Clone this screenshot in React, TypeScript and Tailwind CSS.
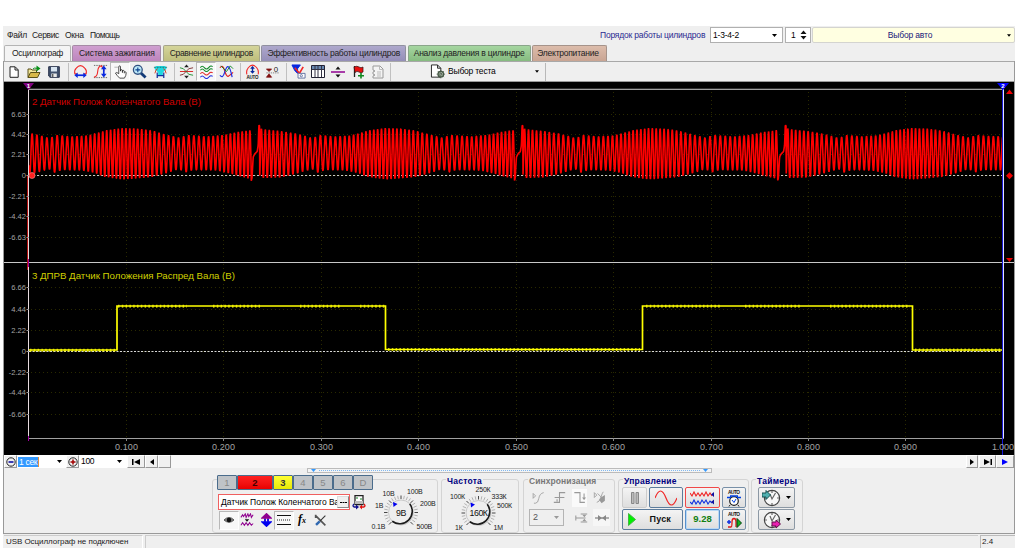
import type { ReactNode } from "react";
import clsx from "clsx";

const RED = "#ff0000";
const REV = 263.2; // px per crankshaft revolution
const GAP = 251.2; // x of the missing teeth

// upper / lower envelope of the crank sensor, x is measured from the gap
const TOP: [number, number][] = [
  [0, 130], [8, 127], [11, 129], [29, 131], [44, 133.5], [54, 136], [62, 138.5], [67, 135], [84, 136.5],
  [99, 135.5], [109, 133], [119, 130], [134, 128], [149, 128.5], [164, 130.5], [176, 134], [192, 138],
  [198, 135], [219, 136.5], [236, 135], [249, 132], [263.2, 130],
];
const BOTTOM: [number, number][] = [
  [0, 179], [11, 178], [29, 177.5], [44, 174], [54, 171], [61, 169], [65, 173], [74, 170], [94, 170.5],
  [107, 173], [117, 177], [134, 179.5], [149, 178.5], [164, 177], [179, 173], [191, 169], [197, 172.5],
  [205, 170], [229, 170.5], [244, 174], [254, 177], [263.2, 179],
];

function lerp(points: [number, number][], x: number) {
  for (let i = 1; i < points.length; i++) {
    const [x1, y1] = points[i];
    if (x <= x1) {
      const [x0, y0] = points[i - 1];
      return y0 + ((y1 - y0) * (x - x0)) / (x1 - x0);
    }
  }
  return points[points.length - 1][1];
}

function crankPath() {
  const pts: string[] = [];
  for (let x = 29; x <= 1002.5; x += 0.25) {
    const p = (((x - GAP) % REV) + REV) % REV;
    let y: number;
    if (p < 8.4) {
      y = lerp([[0, 181], [0.8, 178], [2, 157], [3.5, 154], [6, 151.5], [7, 145], [7.7, 125], [8.4, 126]], p);
    } else {
      const t = (p / REV) * 2 * Math.PI;
      const phase = 60 * t + 4.4 * Math.sin(2 * t);
      const top = lerp(TOP, p);
      const bottom = lerp(BOTTOM, p);
      y = (top + bottom) / 2 + (Math.sin(phase + 0.6) * (bottom - top)) / 2;
    }
    pts.push(`${x.toFixed(2)},${y.toFixed(1)}`);
  }
  return pts.join(" ");
}

const gridX = [126.5, 223.5, 321.5, 418.5, 516.5, 613.5, 711.5, 808.5, 905.5];
const xLabels = ["0.100", "0.200", "0.300", "0.400", "0.500", "0.600", "0.700", "0.800", "0.900"];
const topScale: [string, number][] = [
  ["6.63", 114.5], ["4.42", 134.5], ["2.21", 154.5], ["0", 175.5], ["-2.21", 196.5], ["-4.42", 216.5], ["-6.63", 237.5],
];
const bottomScale: [string, number][] = [
  ["6.66", 287.5], ["4.44", 309.5], ["2.22", 330.5], ["0", 351.5], ["-2.22", 372.5], ["-4.44", 392.5], ["-6.66", 414.5],
];

function Scope() {
  return (
    <svg className="block h-[373px] w-[1010px] shrink-0 bg-black" viewBox="4 82 1010 373" fontFamily="Liberation Sans, sans-serif">
      {/* grid */}
      <g stroke="#2a2a00" strokeDasharray="1 3">
        {gridX.map((x) => (
          <path key={x} d={`M${x} 92V262M${x} 264V438`} />
        ))}
        {[...topScale, ...bottomScale].map(([, y]) => (
          <path key={y} d={`M31 ${y}H1002`} />
        ))}
      </g>

      <path d="M28 89.5H1004" stroke="#a0a0a0" />
      <path d="M28 88.5H1004" stroke="#303030" />
      <path d="M29 175.5H1002" stroke="#c8c8c8" strokeDasharray="2 2" />
      <path d="M29 351.5H1002" stroke="#d8d8d8" strokeDasharray="2 1.5" />

      {/* channel 2 */}
      <polyline points={crankPath()} fill="none" stroke={RED} strokeWidth="1.6" strokeLinejoin="bevel" />
      {/* channel 3 */}
      <g fill="none" stroke="#ffff00">
        <path d="M29 350H117V306H385.5V349.5H642.5V306H912.5V350H1002.5" strokeWidth="1.7" />
        <path
          d="M30 350.2H116M118 306.2H187M213 306.2H260M300 306.2H340M360 306.2H385M388 349.5H640M646 306.2H720M745 306.2H800M830 306.2H910M915 350H1002"
          strokeWidth="3"
          strokeDasharray="1.5 2.3"
          opacity="0.75"
        />
      </g>

      {/* axes */}
      <path d="M4 262.5H1014" stroke="#c8c8c8" />
      <path d="M28 438.5H1004" stroke="#a0a0a0" />
      <path d="M27.5 176V270" stroke="#b01010" />
      <path d="M28.5 89V438" stroke="#e8dce0" />
      <path d="M28.5 259V267M28.5 436V441" stroke="#a000a0" />
      <path d="M1002.5 89V455" stroke="#1818d8" />
      <path d="M1003.5 89V438" stroke="#e0e0ff" />
      <path d={gridX.map((x) => `M${x} 438V441`).join("")} stroke="#888" />

      <g fill="#a4a4a4" fontSize="8">
        {[...topScale, ...bottomScale].map(([label, y]) => (
          <g key={y}>
            <text x="26" y={y + 2.5} textAnchor="end" fontSize="7.6">{label}</text>
            <path d={`M26.5 ${y}H29`} stroke="#999" />
          </g>
        ))}
        {xLabels.map((label, i) => (
          <text key={label} x={gridX[i] - 11.5} y="450" fontSize="9" textLength="23">{label}</text>
        ))}
        <text x="992" y="450" fontSize="9" textLength="22">1.000</text>
      </g>

      <text x="32" y="105" fontSize="9.7" textLength="169" fill="#d00000">2 Датчик Полож Коленчатого Вала (В)</text>
      <text x="32" y="278.5" fontSize="9.7" textLength="203" fill="#d0d000">3 ДПРВ Датчик Положения Распред Вала (В)</text>

      {/* cursors and level marks */}
      <path d="M23 83H34L28.5 90Z" fill="#800080" />
      <text x="28.5" y="88" fontSize="6" fontWeight="bold" fill="#fff" textAnchor="middle">1</text>
      <path d="M997 83H1009L1003 90Z" fill="#0000ff" />
      <text x="1003" y="88" fontSize="6" fontWeight="bold" fill="#fff" textAnchor="middle">2</text>
      <circle cx="32" cy="175.5" r="3" fill="#ff2020" stroke="#ff9090" strokeWidth="0.6" />
      <path d="M1006 94L1009.5 89.5L1013 94ZM1006 258H1013L1009.5 262ZM1006 175.8L1009.5 172.3L1013 175.8L1009.5 179.3Z" fill="#f00000" />
    </svg>
  );
}

function Icon({ children, className = "h-4 w-4", box = "0 0 16 16" }: { children: ReactNode; className?: string; box?: string }) {
  return (
    <svg className={clsx("block shrink-0", className)} viewBox={box} fill="none" stroke="#222" strokeWidth="1">
      {children}
    </svg>
  );
}

function Tool({ children, pressed }: { children: ReactNode; pressed?: boolean }) {
  return (
    <div
      className={clsx(
        "flex h-[19px] w-5 shrink-0 items-center justify-center",
        pressed && "border border-r-white border-b-white border-t-[#b8b8b8] border-l-[#b8b8b8] bg-[#f8f8f8]",
      )}
    >
      {children}
    </div>
  );
}

const Sep = () => <div className="mr-[1px] ml-[4px] h-[18px] w-px shrink-0 bg-[#c0c0c0]" />;

const Arrow = ({ className = "w-[5px]" }: { className?: string }) => (
  <Icon className={clsx("h-[3px]", className)} box="0 0 5 3">
    <path d="M0 0H5L2.5 3Z" fill="#000" stroke="none" />
  </Icon>
);

function TopRow() {
  return (
    <div className="flex h-[19px] items-start text-[8.5px] leading-[19px]">
      <div className="flex w-[597px] gap-[6px] pl-[4px] text-[#222]">
        <span className="w-[19px] tracking-[-0.25px]">Файл</span>
        <span className="w-[27px] tracking-[-0.35px]">Сервис</span>
        <span className="w-[19px] tracking-[-0.25px]">Окна</span>
        <span className="tracking-[-0.6px]">Помощь</span>
      </div>
      <div className="w-[110px] leading-[18px] whitespace-nowrap text-[#2a2a90] tracking-[-0.2px]">Порядок работы цилиндров</div>
      <div className="mt-[1px] flex h-[16px] w-[73px] items-center justify-between border border-[#b0b0b0] bg-white pr-[5px] pl-[2px] leading-[14px] tracking-[-0.2px]">
        1-3-4-2
        <Arrow />
      </div>
      <div className="mt-[1px] ml-[2px] flex h-[16px] w-[26px] items-center justify-between border border-[#b0b0b0] bg-white pr-[3px] pl-[5px] leading-[14px]">
        1
        <Icon className="h-[10px] w-[7px]" box="0 0 7 10">
          <path d="M0.5 4L3.5 0.5L6.5 4ZM0.5 6L3.5 9.5L6.5 6Z" fill="#111" stroke="none" />
        </Icon>
      </div>
      <div className="mt-[1px] ml-[1px] flex h-[16px] flex-1 items-center rounded-[2px] border border-[#d4d4d0] bg-[#ffffe1] pr-[3px] leading-[14px] text-[#20207a]">
        <span className="flex-1 text-center tracking-[-0.15px]">Выбор авто</span>
        <Arrow className="w-[4px]" />
      </div>
    </div>
  );
}

const tabs = [
  { label: "Осциллограф", box: "w-[67px] bg-[#f4f4f4] border-[#b4b4b4]", text: "tracking-[-0.35px]" },
  { label: "Система зажигания", box: "w-[89px] bg-linear-to-b from-[#cf9fd0] to-[#bd85bd] border-[#a58aa5]", text: "tracking-[-0.1px]" },
  { label: "Сравнение цилиндров", box: "w-[97px] bg-linear-to-b from-[#d4d49a] to-[#bebe7c] border-[#a5a58a]", text: "tracking-[-0.3px]" },
  { label: "Эффективность работы цилиндров", box: "w-[145px] bg-linear-to-b from-[#aea8cc] to-[#948eb8] border-[#9090a0]", text: "tracking-[-0.26px]" },
  { label: "Анализ давления в цилиндре", box: "w-[123px] bg-linear-to-b from-[#a5d6a0] to-[#86bb80] border-[#8aa58a]", text: "tracking-[-0.22px]" },
  { label: "Электропитание", box: "w-[75px] bg-linear-to-b from-[#dcbcab] to-[#c9a593] border-[#a5938a]", text: "tracking-[-0.24px] pr-[3px]" },
];

function Toolbar() {
  return (
    <div className="flex h-[20px] shrink-0 items-center border-t border-[#a8a8a8] text-[8.5px]">
      <Tool>
        <Icon className="h-[12px] w-[10px]" box="0 0 10 12">
          <path d="M1 .8H6.2L9.2 3.8V11.3H1ZM6 1V4H9" fill="#fff" />
        </Icon>
      </Tool>
      <Tool>
        <Icon className="h-[14px] w-[14px]" box="0 0 14 14">
          <path d="M1 12.5V4H4L5 5H9.5V7" fill="#f2e79a" stroke="#5a5018" />
          <path d="M1 12.5L3.5 7.5H13L10.5 12.5Z" fill="#d8b848" stroke="#5a5018" />
          <path d="M9.5 .5L13.5 3.5L9.5 6.5Z" fill="#089018" stroke="none" />
          <path d="M6 4Q7 2.5 10 3.3" stroke="#089018" />
        </Icon>
      </Tool>
      <Tool>
        <Icon className="h-[12px] w-[12px]" box="0 0 12 12">
          <path d="M.7 .7H11.3V11.3H2L.7 10Z" fill="#40506c" stroke="#28304a" />
          <path d="M3 1H9V5.5H3Z" fill="#d8e4f0" stroke="none" />
          <path d="M3.3 7.5H8.8V11H3.3Z" fill="#e8e8e8" stroke="none" />
          <path d="M4.8 8V11" />
        </Icon>
      </Tool>
      <Sep />
      <Tool>
        <Icon className="h-[15px] w-[15px]">
          <path d="M4.500 10.500H2Q1 7 3.500 4.500Q8 -1 12.500 4.500Q15 7 14 10.500H11.500" stroke="#f02828" strokeWidth="1.2" />
          <path d="M3 12H13" stroke="#0828e0" strokeWidth="1.8" />
          <path d="M5 9L1.5 12L5 15ZM11 9L14.5 12L11 15Z" fill="#0828e0" stroke="none" />
        </Icon>
      </Tool>
      <Tool>
        <Icon className="h-[15px] w-[15px]">
          <path d="M1 1.5H15M1 14.5H15" stroke="#666" strokeDasharray="1.5 1" />
          <path d="M1 14Q4.5 14 5 8Q5.5 2 9 2L12 7" stroke="#f02828" strokeWidth="1.2" />
          <path d="M11.5 4V12" stroke="#0828e0" strokeWidth="1.8" />
          <path d="M8.5 5.5L11.5 1.5L14.5 5.5ZM8.5 10.5L11.5 14.5L14.5 10.5Z" fill="#0828e0" stroke="none" />
        </Icon>
      </Tool>
      <Tool pressed>
        <Icon className="h-[14px] w-[15px]">
          <path d="M6 10V2.2Q6 1 7 1Q8 1 8 2.2V7V5.5Q10 4.7 10.2 6.5V7.5V6.2Q12 5.5 12.3 7.3V8Q14.5 7.2 14.5 9Q14.5 12 12.5 15H7Q4 12 2.2 9.3Q3.5 7.5 6 10ZM10.2 7V9M12.3 8V9.5" fill="#fff" strokeWidth="0.9" />
          <path d="M1 2.5H5" stroke="#aaa" />
        </Icon>
      </Tool>
      <Tool>
        <Icon className="mr-[2px] h-[15px] w-[15px]">
          <path d="M9.5 9.5L14.5 14.5" stroke="#123a78" strokeWidth="3" />
          <circle cx="6.2" cy="6.2" r="4.7" fill="#bde8f8" stroke="#305080" strokeWidth="1.4" />
          <path d="M6.2 3.6V8.8M3.6 6.2H8.8" stroke="#0b408c" strokeWidth="1.2" />
        </Icon>
      </Tool>
      <Tool>
        <Icon className="h-[15px] w-[15px]">
          <path d="M3 2H13L14.500 5L10.500 9V12H5.500V9L1.500 5Z" fill="#20d8e0" stroke="none" />
          <path d="M1 3.500H15" stroke="#107878" strokeDasharray="2 1" />
          <path d="M2 10Q3 5 5 5M11 5Q13 5 14 10" stroke="#d04020" />
          <path d="M4.500 15V9M11.500 15V9M4.500 12.500H11.500" stroke="#10309c" strokeWidth="1.300" />
        </Icon>
      </Tool>
      <Sep />
      <Tool>
        <Icon className="h-[15px] w-[15px]">
          <path d="M1 8H15" stroke="#d82020" />
          <path d="M1 4Q5 4 7.5 8Q10 12 15 12" stroke="#209030" />
          <path d="M1 12Q5 12 7.5 8Q10 4 15 4" stroke="#803030" />
          <path d="M5.5 3.5L8 .5L10.5 3.5ZM5.5 12.5L8 15.5L10.5 12.5Z" fill="#222" stroke="none" />
        </Icon>
      </Tool>
      <Tool pressed>
        <Icon className="h-[14px] w-[15px]">
          <path d="M1 3Q3 0 5.5 3T10.5 3T15 2M1 6Q3 3 5.5 6T10.5 6T15 5" stroke="#108828" strokeWidth="1.2" />
          <path d="M1 10Q3 7 5.5 10T10.5 10T15 9" stroke="#e02020" strokeWidth="1.2" />
          <path d="M1 14Q3 11 5.5 14T10.5 14T15 13" stroke="#2030e0" strokeWidth="1.2" />
        </Icon>
      </Tool>
      <Tool>
        <Icon className="h-[15px] w-[15px]">
          <path d="M1 4Q4 0 6 7T10 13T15 9" stroke="#e02020" strokeWidth="1.3" />
          <path d="M1 12Q4 16 6 9T10 3T14 14" stroke="#2030e0" strokeWidth="1.3" />
          <path d="M2 2L8 8L12 2L15 5" stroke="#108828" />
        </Icon>
      </Tool>
      <Sep />
      <Tool>
        <Icon className="h-[15px] w-[15px]">
          <path d="M2 11Q1 7 3.500 4Q8 -1.500 12.500 4Q15 7 14 11" stroke="#f02828" strokeWidth="1.2" />
          <path d="M8 3V9" stroke="#0828a0" strokeWidth="1.5" />
          <path d="M5.5 5L8 2L10.5 5ZM5.5 7.5L8 10.5L10.5 7.5Z" fill="#0828a0" stroke="none" />
          <text x="1.5" y="15.8" fontSize="4.8" fontWeight="bold" textLength="13" fill="#111" stroke="none">AUTO</text>
        </Icon>
      </Tool>
      <Tool>
        <Icon className="h-[14px] w-[15px]">
          <path d="M1 4.5H7L4 7.5ZM1 14H7L4 10Z" fill="#801010" stroke="#801010" strokeWidth=".8" />
          <path d="M1 9H15" stroke="#777" strokeDasharray="1.5 1" />
          <text x="9.5" y="7.5" fontSize="9" fill="#222" stroke="none">0</text>
        </Icon>
      </Tool>
      <Sep />
      <Tool>
        <Icon className="h-[15px] w-[15px]">
          <path d="M1 1H10L7 5V10L4 7Z" fill="#0828e0" stroke="#0828e0" />
          <path d="M4 4L9 10L13 3" stroke="#f02828" strokeWidth="1.8" />
          <path d="M7.5 10H15V15H7.5Z" fill="#fff" stroke="#6070a0" />
          <circle cx="11" cy="12.5" r="1.2" stroke="#6070a0" />
        </Icon>
      </Tool>
      <Tool>
        <Icon className="h-[13px] w-[14px]" box="0 0 14 13">
          <path d="M.5 .5H13.5V12.5H.5Z" fill="#fff" stroke="#223" />
          <path d="M1 1H13V4H1Z" fill="#6888b0" stroke="none" />
          <path d="M.5 4.5H13.5M4 1V12M7 1V12M10.5 1V12" stroke="#334" />
        </Icon>
      </Tool>
      <Tool>
        <Icon className="h-[14px] w-[14px]" box="0 0 14 14">
          <path d="M0 7H14" stroke="#900090" strokeWidth="1.5" />
          <path d="M4.5 4.5L7 1.5L9.5 4.5ZM4.5 9.5L7 12.5L9.5 9.5Z" fill="#111" stroke="none" />
        </Icon>
      </Tool>
      <Tool>
        <Icon className="h-[14px] w-[13px]" box="0 0 13 14">
          <path d="M2.5 1V12" strokeWidth="1.3" />
          <path d="M2 2Q5 .5 7 2T11 2V7Q9 8.5 7 7T3 7.5Z" fill="#e81010" stroke="#301010" strokeWidth=".7" />
          <path d="M9 8V13.5M6 10.8H12" stroke="#108820" strokeWidth="1.6" />
        </Icon>
      </Tool>
      <Tool>
        <Icon className="h-[14px] w-[12px]" box="0 0 12 14">
          <path d="M1 1H8L11 4V13H1V11L3 10L1 9V7L3 6L1 5Z" fill="#f4f4f4" stroke="#999" />
          <path d="M7.5 1V4.5H11M5 7H9M5 9H9M5 11H9" stroke="#bbb" />
        </Icon>
      </Tool>
      <div className="ml-[2px] h-[18px] w-px bg-[#c0c0c0]" />
      <Icon className="ml-[39px] h-[15px] w-[16px]">
        <path d="M1 1H7.5L11 4.5V14H1ZM7.5 1V4.5H11" fill="#fff" />
        <circle cx="11" cy="10.8" r="3" fill="#dce8d8" stroke="#465846" strokeWidth="1.3" />
        <path d="M11 6.3V15.3M6.5 10.8H15.5M7.8 7.6L14.2 14M7.8 14L14.2 7.6" stroke="#465846" strokeWidth=".8" />
        <circle cx="11" cy="10.8" r="1" fill="#fff" stroke="#465846" />
      </Icon>
      <span className="ml-[2px] w-[87px] tracking-[-0.2px]">Выбор теста</span>
      <Arrow className="w-[4px]" />
      <div className="ml-[6px] h-[18px] w-px bg-[#b8b8b8]" />
    </div>
  );
}

function Box({ children, className }: { children?: ReactNode; className: string }) {
  return (
    <div className={clsx("flex h-[13px] shrink-0 items-center justify-center border border-t-white border-r-[#999] border-b-[#999] border-l-white bg-[#f0f0f0]", className)}>
      {children}
    </div>
  );
}

function ScrollStrip() {
  return (
    <div className="flex h-[13px] shrink-0 items-center bg-[#f7f7f7] text-[8.5px] leading-[13px]">
      <Box className="w-[13px]">
        <Icon className="h-[10px] w-[10px]" box="0 0 10 10">
          <circle cx="5" cy="5" r="4.2" />
          <path d="M2.5 5H7.5" stroke="#0000a0" strokeWidth="1.5" />
        </Icon>
      </Box>
      <div className="flex h-full w-[49px] items-center bg-white pl-px">
        <span className="h-[10px] w-[21px] border-r border-[#e09040] bg-[#3399ff] pl-[1px] leading-[10px] tracking-[-0.3px] whitespace-nowrap text-white">1 сек</span>
        <Arrow className="ml-[18px] w-[5px]" />
      </div>
      <Box className="w-[13px]">
        <Icon className="h-[10px] w-[10px]" box="0 0 10 10">
          <circle cx="5" cy="5" r="4.2" />
          <path d="M2.5 5H7.5M5 2.5V7.5" stroke="#a00000" strokeWidth="1.5" />
        </Icon>
      </Box>
      <div className="flex h-full w-[48px] items-center justify-between bg-white pr-[5px] pl-[2px]">
        <span className="tracking-[-0.3px]">100</span>
        <Arrow />
      </div>
      <Box className="w-[18px]">
        <Icon className="h-[6px] w-[8px]" box="0 0 8 6">
          <path d="M0 0H1.5V6H0ZM8 0V6L2 3Z" fill="#000" stroke="none" />
        </Icon>
      </Box>
      <Box className="w-[13px]">
        <Icon className="h-[6px] w-[4px]" box="0 0 4 6">
          <path d="M4 0V6L0 3Z" fill="#000" stroke="none" />
        </Icon>
      </Box>
      <Box className="w-[13px]" />
      <div className="flex-1" />
      <Box className="w-[12px]">
        <Icon className="h-[6px] w-[4px]" box="0 0 4 6">
          <path d="M0 0V6L4 3Z" fill="#000" stroke="none" />
        </Icon>
      </Box>
      <Box className="ml-[1px] w-[17px]">
        <Icon className="h-[6px] w-[8px]" box="0 0 8 6">
          <path d="M6.5 0H8V6H6.5ZM0 0V6L6 3Z" fill="#000" stroke="none" />
        </Icon>
      </Box>
      <Box className="w-[18px]">
        <Icon className="h-[6px] w-[6px]" box="0 0 6 6">
          <path d="M0 0V6L6 3Z" fill="#0000ff" stroke="none" />
        </Icon>
      </Box>
    </div>
  );
}

function Group({ title, gray, className, children }: { title?: string; gray?: boolean; className: string; children: ReactNode }) {
  return (
    <div className={clsx("relative h-[54px] shrink-0 rounded-[3px] border border-[#d4d4d4]", className)}>
      {title && (
        <span
          className={clsx(
            "absolute top-[-4px] left-[4px] bg-[#efefef] px-[1px] text-[8.5px] leading-[10px] font-bold whitespace-nowrap",
            gray ? "tracking-[0.08px] text-[#777]" : "tracking-[0.25px] text-[#000080]",
          )}
        >
          {title}
        </span>
      )}
      {children}
    </div>
  );
}

function Knob({ value, labels, className, box, cx, cy, r }: { value: string; labels: [string, number, number][]; className: string; box: string; cx: number; cy: number; r: number }) {
  const ticks = Array.from({ length: 25 }, (_, i) => ((-225 + i * 11.25) * Math.PI) / 180);
  return (
    <svg className={clsx("block shrink-0", className)} viewBox={box} fontFamily="Liberation Sans, sans-serif">
      {ticks.map((a, i) => (
        <path
          key={i}
          d={`M${cx + Math.cos(a) * (r + 1)} ${cy + Math.sin(a) * (r + 1)}L${cx + Math.cos(a) * (r + 4.5)} ${cy + Math.sin(a) * (r + 4.5)}`}
          stroke={i % 4 === 0 ? "#333" : "#aaa"}
          strokeWidth="0.9"
        />
      ))}
      <circle cx={cx} cy={cy} r={r} fill="#eeeeee" stroke="#c8c8c8" />
      <path
        d={`M${cx + r * 0.7} ${cy - r * 0.7}A${r} ${r} 0 0 1 ${cx - r * 0.7} ${cy + r * 0.7}`}
        fill="none"
        stroke="#1c1c1c"
        strokeWidth="1.6"
      />
      <path d={`M${cx - 8} ${cy - 10.5}L${cx - 3.5} ${cy - 8.5}L${cx - 7.5} ${cy - 5.5}Z`} fill="#0000f0" />
      <text x={cx} y={cy + 3} fontSize="8.8" textAnchor="middle" letterSpacing="-0.4" fill="#111">{value}</text>
      {labels.map(([label, x, y]) => (
        <text key={label} x={x} y={y} fontSize="7" letterSpacing="-0.2" fill="#222">{label}</text>
      ))}
    </svg>
  );
}

const channels = [
  { name: "1", style: "w-[20px] bg-[#bfc3c7] text-[#888]" },
  { name: "2", style: "w-[36px] bg-linear-to-b from-[#ff2020] to-[#e80000] text-[#400] font-bold" },
  { name: "3", style: "w-[20px] bg-linear-to-b from-[#ffff30] to-[#e8e800] text-[#333] font-bold" },
  { name: "4", style: "w-[20px] bg-[#bfc3c7] text-[#888]" },
  { name: "5", style: "w-[20px] bg-[#bfc3c7] text-[#888]" },
  { name: "6", style: "w-[20px] bg-[#bfc3c7] text-[#888]" },
  { name: "D", style: "w-[20px] bg-[#bfc3c7] text-[#888]" },
];

function ChannelGroup() {
  return (
    <Group className="w-[226px]">
      <div className="flex">
        <div className="w-[157px] shrink-0 pl-[4px]">
          <div className="relative -mt-[5px] flex w-[156px]">
            {channels.map((c) => (
              <div key={c.name} className={clsx("h-[15px] shrink-0 rounded-[1px] border border-[#4a6c8c] text-center text-[9.5px] leading-[13px]", c.style)}>
                {c.name}
              </div>
            ))}
          </div>
          <div className="mt-[4px] flex items-center">
            <div className="ml-px flex h-[16px] w-[132px] shrink-0 items-center border border-[#f06060] bg-white pl-[2px]">
              <span className="w-[116px] text-[8.5px] tracking-[-0.05px] whitespace-nowrap">Датчик Полож Коленчатого Ва</span>
              <span className="flex h-[12px] w-[12px] shrink-0 items-center justify-center border border-[#ddd] border-r-[#888] border-b-[#888] bg-[#f0f0f0]">
                <Icon className="h-px w-[7px]" box="0 0 7 1">
                  <path d="M0 0H2V1H0ZM2.5 0H4.5V1H2.5ZM5 0H7V1H5Z" fill="#000" stroke="none" />
                </Icon>
              </span>
            </div>
            <Icon className="ml-[2px] h-[15px] w-[14px]" box="0 0 14 15">
              <path d="M3 .7H11V9.5H3Z" fill="#fff" strokeWidth="1.3" />
              <path d="M3 6H11V9H3Z" fill="#bbb" stroke="none" />
              <path d="M4 3H6M8 4H10" stroke="#108020" />
              <path d="M2 9Q0 11 2 12H5" stroke="#101090" strokeWidth="1.3" />
              <path d="M4 9.5L7 12L4 14.5Z" fill="#101090" stroke="none" />
              <path d="M12 9Q14 11 12 12H9" stroke="#e01010" strokeWidth="1.3" />
              <path d="M10 9.5L7.5 12L10 14.5Z" fill="#e01010" stroke="none" />
            </Icon>
          </div>
          <div className="mt-[1px] flex h-[18px] items-center pl-[2px]">
            <Tool pressed>
              <Icon className="h-[10px] w-[12px]" box="0 0 12 10">
                <path d="M1 5Q6 0 11 5Q6 9.5 1 5Z" fill="#888" stroke="#555" />
                <circle cx="6" cy="5" r="2.3" fill="#111" stroke="none" />
              </Icon>
            </Tool>
            <Tool>
              <Icon className="mr-[4px] h-[14px] w-[14px]">
                <path d="M1 5L3 2L4 4L6 1L7 5L9 1L10 4L12 1L13 5L15 2M1 14L3 11L5 14L7 11L9 14L11 11L13 14L15 12" stroke="#900090" strokeWidth="1.2" />
                <path d="M5.5 7H10.5L8 10Z" fill="#111" stroke="none" />
              </Icon>
            </Tool>
            <div className="flex w-[15px] justify-center pr-[1px]">
              <Icon className="h-[14px] w-[11px]" box="0 0 11 14">
                <path d="M1 5L5.5 .8L10 5ZM4 5V8M7 5V8" fill="#900090" stroke="#900090" strokeWidth="1.5" />
                <path d="M1 9L5.5 13.2L10 9ZM4 6V9M7 6V9" fill="#0000f0" stroke="#0000f0" strokeWidth="1.5" />
              </Icon>
            </div>
            <Tool pressed>
              <Icon className="h-[12px] w-[14px]" box="0 0 14 12">
                <path d="M0 1.5H14M0 10.5H14" stroke="#111" />
                <path d="M0 6H14" strokeDasharray="1 1" />
              </Icon>
            </Tool>
            <span className="w-[18px] pl-[4px] font-['Liberation_Serif',serif] text-[12px] leading-[13px] font-bold italic">
              f<span className="text-[8px]">x</span>
            </span>
            <Icon className="ml-[2px] h-[13px] w-[13px]">
              <path d="M2 2L14 14M2 1V4H5" stroke="#555" strokeWidth="2" />
              <path d="M14 2L7 9" stroke="#333" strokeWidth="1.3" />
              <path d="M7 9L2.5 13.5" stroke="#3068b0" strokeWidth="3" />
            </Icon>
          </div>
        </div>
        <Knob
          className="h-[52px] w-[67px]"
          box="370 480 67 52"
          cx={401}
          cy={512.5}
          r={12.5}
          value="9В"
          labels={[["0.1В", 371.5, 529], ["1В", 375, 508], ["10В", 382.5, 495.5], ["100В", 407, 493.5], ["200В", 420, 506], ["500В", 416.5, 529]]}
        />
      </div>
    </Group>
  );
}

function SyncGroup() {
  return (
    <Group title="Синхронизация" gray className="ml-[4px] w-[92px]">
      <div className="flex h-[20px] items-center gap-[6px] px-[7px] pt-[15px]">
        <Icon className="h-[13px] w-[14px]">
          <path d="M2 3V9L5 6ZM3 15H5Q8 15 9 9T15 2" stroke="#999" />
        </Icon>
        <Icon className="ml-[2px] h-[13px] w-[13px]">
          <path d="M1 14H8V2H15M2 8H14M5 10V13" stroke="#999" strokeWidth="1.3" />
        </Icon>
        <div className="flex h-[18px] w-[18px] items-center justify-center bg-[#fafafa]">
          <Icon className="h-[13px] w-[14px]">
            <path d="M1 2H8V14H14M13 3V10" stroke="#999" strokeWidth="1.3" />
            <path d="M10.5 8H15.5L13 11Z" fill="#999" stroke="none" />
          </Icon>
        </div>
        <Icon className="h-[13px] w-[14px]">
          <path d="M1 2V8L4 5ZM4 14Q7 14 9 8T12 1M5 3L10 8" stroke="#999" />
          <path d="M9 8L14 5V12L10 15L7 11Z" fill="#999" stroke="none" />
        </Icon>
      </div>
      <div className="flex items-center pt-[9px] pl-[5px]">
        <div className="flex h-[17px] w-[35px] items-center justify-between border border-[#b4b4b4] pr-[4px] pl-[3px] text-[9px] text-[#555]">
          2
          <Icon className="h-[3px] w-[5px]" box="0 0 5 3">
            <path d="M0 0H5L2.5 3Z" fill="#999" stroke="none" />
          </Icon>
        </div>
        <Icon className="ml-[11px] h-[14px] w-[13px]">
          <path d="M1 8H13M7 3H15M7 13H15M1 5V11" stroke="#999" strokeWidth="1.3" />
          <path d="M9 4H14L11.5 7ZM9 12H14L11.5 9Z" fill="#999" stroke="none" />
        </Icon>
        <div className="ml-[5px] flex h-[17px] w-[17px] items-center justify-center bg-[#f6f6f6]">
          <Icon className="h-[8px] w-[14px]" box="0 0 14 8">
            <path d="M0 4H14" stroke="#888" strokeWidth="1.3" />
            <path d="M3 1L7 4L3 7ZM11 1L7 4L11 7Z" fill="#888" stroke="none" />
          </Icon>
        </div>
      </div>
    </Group>
  );
}

function Btn({ children, className }: { children: ReactNode; className: string }) {
  return (
    <div className={clsx("flex h-[21px] shrink-0 items-center justify-center rounded-[2px] border bg-linear-to-b from-[#f4f4f4] to-[#dedede]", className)}>
      {children}
    </div>
  );
}

function ControlGroup() {
  return (
    <Group title="Управление" className="ml-[3px] w-[131px]">
      <div className="flex flex-col gap-[1px] pt-[7px] pl-[3px]">
        <div className="flex gap-[2px]">
          <Btn className="w-[25px] border-[#cccccc]">
            <Icon className="h-[12px] w-[8px]" box="0 0 8 12">
              <path d="M.5 .5H3V11.5H.5ZM5 .5H7.5V11.5H5Z" fill="#bbb" stroke="#888" />
            </Icon>
          </Btn>
          <Btn className="w-[34px] border-[#5c7c9c]">
            <Icon className="h-[16px] w-[22px]" box="0 0 22 16">
              <path d="M0 8Q5.5 -6 11 8T22 8" stroke="#f02828" strokeWidth="1.2" />
            </Icon>
          </Btn>
          <Btn className="w-[35px] border-[#f04848]">
            <Icon className="h-[14px] w-[25px]" box="0 0 25 14">
              <path d="M0 2L2 5L4 1L6 5L8 2L10 5L12 2L14 5L16 1L18 5L20 2L22 5" stroke="#f02020" strokeWidth="1.1" />
              <path d="M0 11L2 13L4 9L6 13L8 10L10 13L12 9L14 12L16 9L18 13L20 10L22 12" stroke="#1030e0" strokeWidth="1.1" />
              <path d="M24 1L21 3.5L24 6ZM24 8.5L21 11L24 13.5Z" fill="#1010a0" stroke="none" />
            </Icon>
          </Btn>
          <Btn className="w-[24px] border-[#7890a8]">
            <Icon className="h-[18px] w-[16px]" box="0 0 16 18">
              <text x="2" y="5" fontSize="4.8" fontWeight="bold" textLength="12" fill="#111" stroke="none">AUTO</text>
              <circle cx="8" cy="12" r="4.3" fill="#fff" strokeWidth="1.2" />
              <path d="M1 8.5H5M11 8.5H15M4 7H12" stroke="#0040e0" strokeWidth="1.5" />
              <path d="M6 11L8 13.5L10 10" stroke="#0040e0" />
              <path d="M4 16L3 17.5M12 16L13 17.5" />
            </Icon>
          </Btn>
        </div>
        <div className="flex gap-[2px]">
          <Btn className="w-[61px] border-[#5c7c9c]">
            <Icon className="h-[13px] w-[8px]" box="0 0 8 13">
              <path d="M.5 .5V12.5L7.5 6.5Z" fill="#00f000" stroke="#40b840" />
            </Icon>
            <span className="w-[42px] pl-[14px] text-[9px] font-bold tracking-[0.2px] text-[#111]">Пуск</span>
          </Btn>
          <Btn className="w-[35px] border-[#5890cc] ring-1 ring-[#b8d8f4] ring-inset">
            <span className="text-[9.5px] font-bold text-[#108010]">9.28</span>
          </Btn>
          <Btn className="w-[24px] border-[#7890a8]">
            <Icon className="h-[18px] w-[16px]" box="0 0 16 18">
              <text x="2" y="5" fontSize="4.8" fontWeight="bold" textLength="12" fill="#111" stroke="none">AUTO</text>
              <path d="M1 11H5M3 9V13" stroke="#1030e0" strokeWidth="1.5" />
              <path d="M2 16H5Q6 16 6 11Q6 7.5 8 7.5T10 11V16" stroke="#e01818" strokeWidth="1.3" />
              <path d="M11 7.5L15.5 12L11 16.5Z" fill="#10b020" stroke="#064010" />
            </Icon>
          </Btn>
        </div>
      </div>
    </Group>
  );
}

function TimerButton({ children }: { children: ReactNode }) {
  return (
    <Btn className="w-[37px] gap-[5px] border-[#8c98a4]">
      <Icon className="h-[18px] w-[19px]" box="0 0 19 18">
        <circle cx="10" cy="9" r="7.6" fill="#f8f8f8" stroke="#444" strokeWidth="1.2" />
        <path d="M10 2V4M10 14V16M3 9H5M15 9H17M8 5L10 10L13.5 4" stroke="#666" strokeWidth="1.2" />
        {children}
      </Icon>
      <Arrow />
    </Btn>
  );
}

export default function App() {
  return (
    <div className="h-[551px] w-[1024px] overflow-hidden bg-white pt-[26px] pl-[3px] font-['Liberation_Sans',Arial,sans-serif] text-black">
      <div className="flex h-[522px] w-[1012px] flex-col bg-[#efefef]">
        <TopRow />

        <div className="flex h-[16px] items-end gap-px pl-px">
          {tabs.map((t) => (
            <div
              key={t.label}
              className={clsx("mr-[0.4px] h-[16px] shrink-0 rounded-t-[2px] border border-b-0 text-center text-[8.5px] leading-[14px] whitespace-nowrap text-[#222]", t.box, t.text)}
            >
              {t.label}
            </div>
          ))}
        </div>

        <div className="flex h-[473px] shrink-0 flex-col border-r border-b border-l border-[#999]">
          <Toolbar />
          <div className="h-px shrink-0 bg-[#999]" />
          <Scope />
          <ScrollStrip />

          {/* control panel */}
          <div className="flex flex-1 flex-col">
            <div className="ml-[303px] flex h-[5px] w-[405px] shrink-0 items-center border border-[#bbb] bg-[#f4f4f4] px-[3px]">
              <Arrow className="w-[5px] [&_path]:fill-[#3399ff]" />
              <div className="mx-[3px] h-px flex-1 border-t border-dotted border-[#80b8f0]" />
              <Arrow className="w-[5px] [&_path]:fill-[#3399ff]" />
            </div>
            <div className="mt-[6px] flex pl-[208px]">
              <ChannelGroup />
              <Group title="Частота" className="ml-[3px] w-[78px]">
                <Knob
                  className="h-[52px] w-[76px]"
                  box="442 480 76 52"
                  cx={478.5}
                  cy={513}
                  r={12.5}
                  value="160К"
                  labels={[["1К", 455, 529.5], ["100К", 450, 499], ["250К", 475.5, 491.5], ["333К", 491.5, 499], ["500К", 497, 508], ["1М", 493.5, 529.5]]}
                />
              </Group>
              <SyncGroup />
              <ControlGroup />
              <Group title="Таймеры" className="ml-[2px] w-[52px]">
                <div className="flex flex-col gap-[1px] pt-[7px] pl-[6px]">
                  <TimerButton>
                    <path d="M0 4H4V1.5L8.5 6L4 10.5V8H0Z" fill="#50b0b0" stroke="#145050" />
                  </TimerButton>
                  <TimerButton>
                    <path d="M10 11H14V9L18.5 13L14 17V15H10Z" fill="#e820b0" stroke="#601048" />
                  </TimerButton>
                </div>
              </Group>
            </div>
          </div>
        </div>

        <div className="mt-px flex h-[13px] gap-[2px] pl-px text-[8px] leading-[12px] text-[#222]">
          <div className="w-[139px] border-t border-r border-[#ccc] border-r-white pl-[2px] tracking-[-0.06px] whitespace-nowrap">USB Осциллограф не подключен</div>
          <div className="flex-1 border-t border-l border-[#ccc]" />
          <div className="w-[35px] border-t border-l border-[#bbb] pl-[1px]">2.4</div>
        </div>
      </div>
    </div>
  );
}
